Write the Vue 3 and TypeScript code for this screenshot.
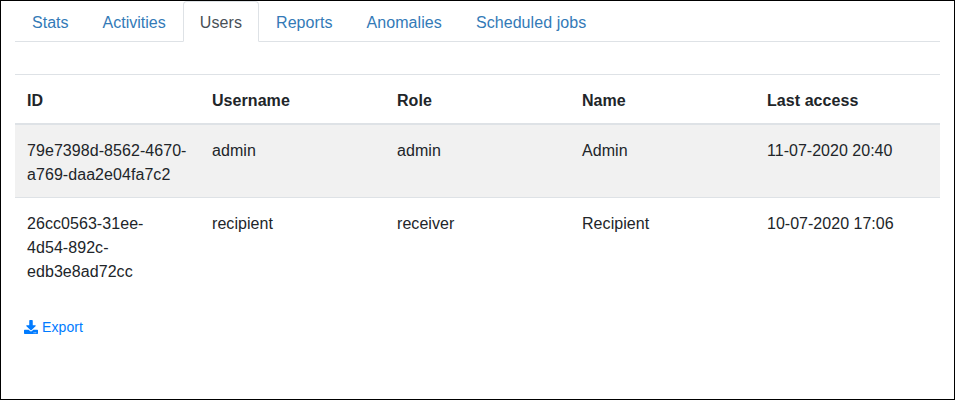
<script setup lang="ts">
interface User {
  id: string
  username: string
  role: string
  name: string
  lastAccess: string
}

const tabs: string[] = ['Stats', 'Activities', 'Users', 'Reports', 'Anomalies', 'Scheduled jobs']
const activeTab = 'Users'
const columns: string[] = ['ID', 'Username', 'Role', 'Name', 'Last access']
const users: User[] = [
  { id: '79e7398d-8562-4670-\na769-daa2e04fa7c2', username: 'admin', role: 'admin', name: 'Admin', lastAccess: '11-07-2020 20:40' },
  { id: '26cc0563-31ee-\n4d54-892c-\nedb3e8ad72cc', username: 'recipient', role: 'receiver', name: 'Recipient', lastAccess: '10-07-2020 17:06' },
]
</script>

<template>
  <main class="page">
    <nav class="tabs">
      <a v-for="tab in tabs" :key="tab" class="tab" :class="{ active: tab === activeTab }">{{ tab }}</a>
    </nav>
    <table class="users">
      <thead>
        <tr>
          <th v-for="column in columns" :key="column">{{ column }}</th>
        </tr>
      </thead>
      <tbody>
        <tr v-for="user in users" :key="user.id">
          <td class="id">{{ user.id }}</td>
          <td>{{ user.username }}</td>
          <td>{{ user.role }}</td>
          <td>{{ user.name }}</td>
          <td class="date">{{ user.lastAccess }}</td>
        </tr>
      </tbody>
    </table>
    <button class="export" type="button">
      <svg class="icon" viewBox="0 0 512 512" aria-hidden="true">
        <path fill="currentColor" d="M216 0h80c13.300 0 24 10.700 24 24v168h87.700c17.800 0 26.700 21.500 14.100 34.100L269.700 378.300c-7.500 7.500-19.800 7.500-27.300 0L90.100 226.100c-12.600-12.600-3.700-34.100 14.100-34.100H192V24c0-13.300 10.700-24 24-24zm296 376v112c0 13.300-10.700 24-24 24H24c-13.300 0-24-10.700-24-24V376c0-13.300 10.700-24 24-24h146.700l49 49c20.100 20.100 52.500 20.100 72.600 0l49-49H488c13.300 0 24 10.700 24 24zm-124 88c0-11-9-20-20-20s-20 9-20 20 9 20 20 20 20-9 20-20zm64 0c0-11-9-20-20-20s-20 9-20 20 9 20 20 20 20-9 20-20z" />
      </svg>
      <span class="label">Export</span>
    </button>
  </main>
</template>

<style>
body {
  margin: 0;
  background: #fff;
}
</style>

<style scoped>
.page {
  box-sizing: border-box;
  width: 100%;
  height: 400px;
  padding: 0 14px;
  border: 1px solid #000;
  color: #212529;
  font: 16px/24px "Liberation Sans", Arial, sans-serif;
  letter-spacing: 0.06px;
  overflow: hidden;
}

.tabs {
  display: flex;
  height: 40px;
  border-bottom: 1px solid #dee2e6;
}

.tab {
  box-sizing: border-box;
  height: 41px;
  padding: 10px 16px 6px;
  border: 1px solid transparent;
  border-top: 0;
  color: #337ab7;
  letter-spacing: 0.01px;
  white-space: nowrap;
}

.tab.active {
  border-color: #dee2e6 #dee2e6 #fff;
  border-top: 1px solid #dee2e6;
  border-radius: 4px 4px 0 0;
  padding-top: 9px;
  background: #fff;
  color: #495057;
  letter-spacing: 0.1px;
}

.tab.active ~ .tab {
  letter-spacing: 0.07px;
}

.tab:last-child {
  letter-spacing: 0.1px;
}

.users {
  width: 100%;
  margin: 32px 0 16px;
  border-collapse: collapse;
  table-layout: fixed;
}

.users th,
.users td {
  padding: 14px 12px 10px;
  border-top: 1px solid #dee2e6;
  text-align: left;
  vertical-align: top;
}

.users th {
  border-bottom: 2px solid #dee2e6;
  font-weight: 700;
}

.users .id {
  white-space: pre-line;
}

.users .date {
  letter-spacing: 0.02px;
}

.users tbody tr:nth-child(odd) {
  background: #f1f1f1;
}

.export {
  display: flex;
  align-items: center;
  gap: 4px;
  margin: 0;
  padding: 6px 9px 4px;
  border: 0;
  background: transparent;
  color: #007bff;
  font: 14px/21px "Liberation Sans", Arial, sans-serif;
  letter-spacing: 0.1px;
}

.label {
  padding-top: 1px;
}

.icon {
  display: block;
  width: 14px;
  height: 14px;
}
</style>
